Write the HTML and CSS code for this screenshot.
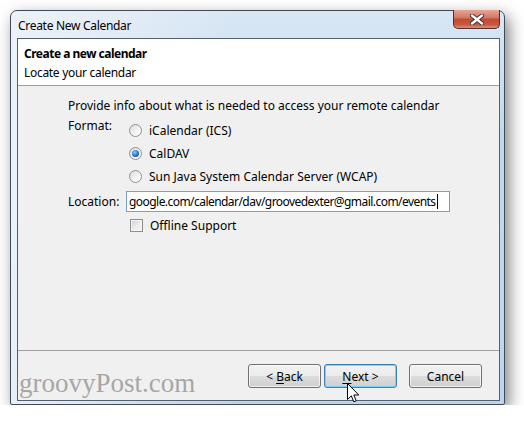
FILE: index.html
```html
<!DOCTYPE html>
<html lang="en">
<head>
    <meta charset="UTF-8">
    <title>Create New Calendar</title>
    <link rel="stylesheet" href="styles.css">
</head>
<body>
    <div class="window">
        <div class="titlebar">
            <span class="title">Create New Calendar</span>
            <div class="close">
                <svg width="14" height="11" viewBox="0 0 14 11">
                    <path d="M2 1.5 L12 9.5 M12 1.5 L2 9.5" stroke="#3b2a2a" stroke-width="4.2" stroke-linecap="round"/>
                    <path d="M2 1.5 L12 9.5 M12 1.5 L2 9.5" stroke="#ffffff" stroke-width="2.4" stroke-linecap="round"/>
                </svg>
            </div>
        </div>
        <div class="client">
            <div class="header">
                <div class="header-title">Create a new calendar</div>
                <div class="header-sub">Locate your calendar</div>
            </div>
            <div class="content">
                <p class="intro">Provide info about what is needed to access your remote calendar</p>
                <div class="row format-row">
                    <span class="label">Format:</span>
                    <div class="options">
                        <div class="option"><span class="radio"></span>iCalendar (ICS)</div>
                        <div class="option"><span class="radio checked"></span>CalDAV</div>
                        <div class="option"><span class="radio"></span>Sun Java System Calendar Server (WCAP)</div>
                    </div>
                </div>
                <div class="row location-row">
                    <span class="label">Location:</span>
                    <div class="field">google.com/calendar/dav/groovedexter@gmail.com/events<span class="caret"></span></div>
                </div>
                <div class="row check-row">
                    <span class="label"></span>
                    <div class="option"><span class="checkbox"></span>Offline Support</div>
                </div>
            </div>
            <div class="footer">
                <button class="btn">&lt; <u>B</u>ack</button>
                <button class="btn btn-default"><u>N</u>ext &gt;</button>
                <button class="btn btn-cancel">Cancel</button>
            </div>
        </div>
        <div class="watermark">groovyPost.com</div>
        <svg class="cursor" width="13" height="21" viewBox="0 0 13 21">
            <path d="M0.5 0.5 L0.5 16.5 L4.3 12.8 L6.8 18.8 L9.2 17.8 L6.8 12 L11.8 12 Z" fill="#ffffff" stroke="#000000" stroke-width="1" stroke-linejoin="miter"/>
        </svg>
    </div>
</body>
</html>
```

FILE: styles.css
```css
body {
    margin: 0;
    background: #ffffff;
    font-family: 'Noto Sans', 'Open Sans', sans-serif;
    font-size: 12px;
    color: #000;
}
.window {
    position: relative;
    box-sizing: border-box;
    width: 495px;
    height: 395px;
    margin: 10px 0 0 10px;
    padding: 0 4px 3px 6px;
    display: flex;
    flex-direction: column;
    border: 1px solid #3f4b58;
    border-radius: 7px 7px 2px 2px;
    background:
        linear-gradient(to right, rgba(240, 244, 248, 0.85), rgba(240, 244, 248, 0) 45%),
        linear-gradient(#d9e7f5, #c3d9ef 30%, #bdd5ee);
    box-shadow: 4px 6px 16px rgba(0, 0, 0, 0.5);
}
.titlebar {
    height: 27px;
    display: flex;
    justify-content: space-between;
    align-items: flex-start;
}
.title {
    margin: 7px 0 0 1px;
    line-height: 16px;
    letter-spacing: -0.3px;
    color: #000;
}
.close {
    width: 47px;
    height: 19px;
    margin-top: -1px;
    box-sizing: border-box;
    border: 1px solid #4b3232;
    border-top: none;
    border-radius: 0 0 5px 5px;
    background: linear-gradient(#e7a595, #d27561 45%, #c24a33 50%, #c8563e 80%, #df8e78);
    display: flex;
    align-items: center;
    justify-content: center;
}
.client {
    flex: 1;
    display: flex;
    flex-direction: column;
    border: 1px solid #54606d;
    background: #f0f0f0;
}
.header {
    height: 47px;
    box-sizing: border-box;
    padding: 5px 0 0 6px;
    background: #ffffff;
    border-bottom: 1px solid #a0a0a0;
    line-height: 19px;
    letter-spacing: -0.3px;
}
.header-title {
    font-weight: bold;
    letter-spacing: -0.5px;
}
.content {
    flex: 1;
    padding: 12px 0 0 50px;
}
.intro {
    margin: 0;
    line-height: 16px;
}
.row {
    display: flex;
}
.label {
    width: 58px;
    flex-shrink: 0;
    line-height: 16px;
}
.format-row {
    margin-top: 4px;
}
.options {
    margin-top: 1px;
}
.option {
    height: 23px;
    display: flex;
    align-items: center;
}
.radio, .checkbox {
    width: 13px;
    height: 13px;
    box-sizing: border-box;
    margin: 0 7px 0 3px;
    border: 1px solid #8f8f8f;
    background: linear-gradient(135deg, #dcdcdc, #f4f4f4 60%, #ffffff);
    flex-shrink: 0;
}
.radio {
    border-radius: 50%;
    position: relative;
}
.radio.checked::after {
    content: "";
    position: absolute;
    left: 2px;
    top: 2px;
    width: 7px;
    height: 7px;
    border-radius: 50%;
    background: radial-gradient(circle at 40% 35%, #8ad0f7, #1a68b8 60%, #0e3f7e);
}
.checkbox {
    margin-left: 4px;
    border-radius: 0;
    box-shadow: inset 0 0 0 1px #f4f4f4;
    background: linear-gradient(135deg, #cfcfcf, #efefef 60%, #f8f8f8);
}
.location-row {
    margin-top: 3px;
    align-items: center;
}
.field {
    width: 324px;
    height: 21px;
    box-sizing: border-box;
    padding: 0 0 0 2px;
    border: 1px solid #7aa0c8;
    background: #ffffff;
    line-height: 19px;
    letter-spacing: -0.55px;
    white-space: nowrap;
    overflow: hidden;
}
.caret {
    display: inline-block;
    width: 1px;
    height: 15px;
    margin-left: 1px;
    background: #000;
    vertical-align: -3px;
}
.check-row {
    margin-top: 3px;
}
.check-row .option {
    height: 20px;
}
.footer {
    height: 50px;
    box-sizing: border-box;
    border-top: 1px solid #a0a0a0;
    padding: 13px 17px 0 0;
    display: flex;
    justify-content: flex-end;
    align-items: flex-start;
}
.btn {
    width: 73px;
    height: 24px;
    padding: 0;
    font-family: inherit;
    font-size: 12px;
    color: #000;
    border: 1px solid #707070;
    border-radius: 3px;
    background: linear-gradient(#f2f2f2, #ebebeb 50%, #dddddd 50%, #cfcfcf);
    box-shadow: inset 0 0 0 1px rgba(255, 255, 255, 0.7);
}
.btn u {
    text-decoration-thickness: 1px;
    text-underline-offset: 2px;
}
.btn-default {
    margin-left: 3px;
    border-color: #3c7fb1;
    box-shadow: inset 0 0 0 1px #7fd2f6;
}
.btn-cancel {
    margin-left: 12px;
}
.watermark {
    position: absolute;
    left: 8px;
    top: 357px;
    font-family: 'Liberation Serif', serif;
    font-size: 27px;
    color: #a6a6a6;
    line-height: 30px;
}
.cursor {
    position: absolute;
    left: 336px;
    top: 372px;
}
```
